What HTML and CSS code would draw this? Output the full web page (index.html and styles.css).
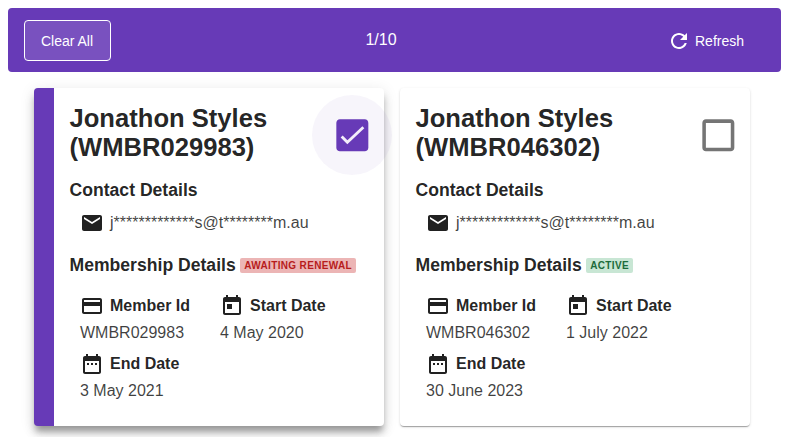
FILE: index.html
```html
<!DOCTYPE html>
<html lang="en">
<head>
<meta charset="utf-8">
<title>Memberships</title>
<link rel="stylesheet" href="styles.css">
</head>
<body>
<header class="bar">
  <button class="clear">Clear All</button>
  <span class="count">1/10</span>
  <button class="refresh"><svg viewBox="0 0 24 24"><path d="M17.65 6.35C16.2 4.9 14.21 4 12 4c-4.42 0-7.99 3.58-7.99 8s3.57 8 7.99 8c3.73 0 6.84-2.55 7.73-6h-2.08c-.82 2.33-3.04 4-5.65 4-3.31 0-6-2.69-6-6s2.69-6 6-6c1.66 0 3.14.69 4.22 1.78L13 11h7V4l-2.35 2.35z"/></svg>Refresh</button>
</header>
<main class="cards">
  <article class="card selected">
    <span class="check on"><svg viewBox="0 0 24 24"><path d="M19 3H5c-1.11 0-2 .9-2 2v14c0 1.1.89 2 2 2h14c1.11 0 2-.9 2-2V5c0-1.1-.89-2-2-2z"/><path class="tick" d="M6 12.6l3.2 3.3 9-8.4"/></svg></span>
    <h2>Jonathon Styles (WMBR029983)</h2>
    <h3 class="contact-title">Contact Details</h3>
    <div class="contact"><svg viewBox="0 0 24 24"><path d="M20 4H4c-1.1 0-1.99.9-1.99 2L2 18c0 1.1.9 2 2 2h16c1.1 0 2-.9 2-2V6c0-1.1-.9-2-2-2zm0 4l-8 5-8-5V6l8 5 8-5v2z"/></svg><span>j*************s@t********m.au</span></div>
    <div class="member-head"><h3>Membership Details</h3><span class="chip red">AWAITING RENEWAL</span></div>
    <div class="fields">
      <div class="field">
        <div class="label"><svg viewBox="0 0 24 24"><path d="M20 4H4c-1.11 0-1.99.89-1.99 2L2 18c0 1.11.89 2 2 2h16c1.11 0 2-.89 2-2V6c0-1.11-.89-2-2-2zm0 14H4v-6h16v6zm0-10H4V6h16v2z"/></svg>Member Id</div>
        <div class="value">WMBR029983</div>
      </div>
      <div class="field">
        <div class="label"><svg viewBox="0 0 24 24"><path d="M19 3h-1V1h-2v2H8V1H6v2H5c-1.11 0-1.99.9-1.99 2L3 19c0 1.1.89 2 2 2h14c1.1 0 2-.9 2-2V5c0-1.1-.9-2-2-2zm0 16H5V8h14v11zM7 10h5v5H7z"/></svg>Start Date</div>
        <div class="value">4 May 2020</div>
      </div>
      <div class="field">
        <div class="label"><svg viewBox="0 0 24 24"><path d="M9 11H7v2h2v-2zm4 0h-2v2h2v-2zm4 0h-2v2h2v-2zm2-7h-1V2h-2v2H8V2H6v2H5c-1.11 0-1.99.9-1.99 2L3 20c0 1.1.89 2 2 2h14c1.1 0 2-.9 2-2V6c0-1.1-.9-2-2-2zm0 16H5V9h14v11z"/></svg>End Date</div>
        <div class="value">3 May 2021</div>
      </div>
    </div>
  </article>
  <article class="card">
    <span class="check"><svg viewBox="0 0 24 24"><path d="M19 5v14H5V5h14m0-2H5c-1.1 0-2 .9-2 2v14c0 1.1.9 2 2 2h14c1.1 0 2-.9 2-2V5c0-1.1-.9-2-2-2z"/></svg></span>
    <h2>Jonathon Styles (WMBR046302)</h2>
    <h3 class="contact-title">Contact Details</h3>
    <div class="contact"><svg viewBox="0 0 24 24"><path d="M20 4H4c-1.1 0-1.99.9-1.99 2L2 18c0 1.1.9 2 2 2h16c1.1 0 2-.9 2-2V6c0-1.1-.9-2-2-2zm0 4l-8 5-8-5V6l8 5 8-5v2z"/></svg><span>j*************s@t********m.au</span></div>
    <div class="member-head"><h3>Membership Details</h3><span class="chip green">ACTIVE</span></div>
    <div class="fields">
      <div class="field">
        <div class="label"><svg viewBox="0 0 24 24"><path d="M20 4H4c-1.11 0-1.99.89-1.99 2L2 18c0 1.11.89 2 2 2h16c1.11 0 2-.89 2-2V6c0-1.11-.89-2-2-2zm0 14H4v-6h16v6zm0-10H4V6h16v2z"/></svg>Member Id</div>
        <div class="value">WMBR046302</div>
      </div>
      <div class="field">
        <div class="label"><svg viewBox="0 0 24 24"><path d="M19 3h-1V1h-2v2H8V1H6v2H5c-1.11 0-1.99.9-1.99 2L3 19c0 1.1.89 2 2 2h14c1.1 0 2-.9 2-2V5c0-1.1-.9-2-2-2zm0 16H5V8h14v11zM7 10h5v5H7z"/></svg>Start Date</div>
        <div class="value">1 July 2022</div>
      </div>
      <div class="field">
        <div class="label"><svg viewBox="0 0 24 24"><path d="M9 11H7v2h2v-2zm4 0h-2v2h2v-2zm4 0h-2v2h2v-2zm2-7h-1V2h-2v2H8V2H6v2H5c-1.11 0-1.99.9-1.99 2L3 20c0 1.1.89 2 2 2h14c1.1 0 2-.9 2-2V6c0-1.1-.9-2-2-2zm0 16H5V9h14v11z"/></svg>End Date</div>
        <div class="value">30 June 2023</div>
      </div>
    </div>
  </article>
</main>
</body>
</html>
```

FILE: styles.css
```css
* { box-sizing: border-box; }
html, body { height: 100%; }
body {
  margin: 0;
  padding: 8px 10px 0 8px;
  overflow: hidden;
  background: #fff;
  color: rgba(0, 0, 0, .87);
  font-family: "Liberation Sans", Arial, sans-serif;
  font-size: 16px;
}
.bar {
  display: flex;
  justify-content: space-between;
  align-items: center;
  height: 64px;
  padding: 0 16px;
  background: #673ab7;
  border-radius: 4px;
  color: #fff;
}
.clear {
  width: 87px;
  height: 41px;
  padding: 1px 1px 0 0;
  background: rgba(255, 255, 255, .12);
  border: 1px solid #fff;
  border-radius: 4px;
  color: #fff;
  font: 14px "Liberation Sans", Arial, sans-serif;
}
.count { margin-top: -1px; font-size: 16px; line-height: 20px; }
.refresh {
  display: flex;
  align-items: center;
  gap: 4px;
  width: 114px;
  height: 42px;
  margin-top: 2px;
  padding: 0 21px 0 16px;
  background: none;
  border: 0;
  color: #fff;
  font: 14px "Liberation Sans", Arial, sans-serif;
}
.refresh svg { flex: none; width: 24px; height: 24px; fill: #fff; }
.cards {
  display: flex;
  gap: 16px;
  margin: 16px 0 0 26px;
}
.card {
  position: relative;
  flex: none;
  width: 350px;
  height: 338px;
  padding: 16px;
  background: #fff;
  border-radius: 4px;
  box-shadow: 0 2px 1px -1px rgba(0,0,0,.2), 0 1px 1px 0 rgba(0,0,0,.14), 0 1px 3px 0 rgba(0,0,0,.12);
}
.card.selected {
  border-left: 20px solid #673ab7;
  box-shadow: 0 7px 6px -2px rgba(0,0,0,.3), 0 8px 10px 1px rgba(0,0,0,.1), 0 3px 14px 2px rgba(0,0,0,.08);
}
h2 {
  width: 250px;
  margin: 0 0 0 -.5px;
  font-size: 25.6px;
  line-height: 29px;
  font-weight: 700;
}
.check {
  position: absolute;
  top: 7px;
  right: -8px;
  display: flex;
  align-items: center;
  justify-content: center;
  width: 80px;
  height: 80px;
  border-radius: 50%;
}
.check svg { width: 42.67px; height: 42.67px; fill: #757575; }
.check.on { background: rgba(103, 58, 183, .05); }
.check.on svg { fill: #673ab7; }
.check .tick { fill: none; stroke: #f3eefa; stroke-width: 1.6; }
h3 { margin: 0; font-size: 17.6px; line-height: 20px; font-weight: 700; }
.contact-title { margin-top: 18px; margin-left: -.5px; }
.contact {
  display: flex;
  align-items: center;
  gap: 6px;
  height: 24px;
  margin: 11px 0 0 10px;
  font-size: 16px;
  color: rgba(0, 0, 0, .75);
}
.contact svg { flex: none; width: 24px; height: 24px; fill: rgba(0, 0, 0, .87); }
.member-head { display: flex; align-items: center; gap: 4.5px; margin-top: 20px; margin-left: -.5px; }
.chip {
  height: 15px;
  padding: 0 4px;
  border-radius: 2px;
  font-size: 10px;
  line-height: 15px;
  font-weight: 700;
  letter-spacing: .35px;
}
.chip.red { background: #ecb5b5; color: #b71c1c; }
.chip.green { background: #c8e6d4; color: #1b6b3a; }
.fields {
  display: grid;
  grid-template-columns: 140px 140px;
  row-gap: 8.5px;
  margin: 19px 0 0 10px;
}
.label {
  display: flex;
  align-items: center;
  gap: 6px;
  height: 24px;
  font-size: 16px;
  font-weight: 700;
}
.label svg { flex: none; width: 24px; height: 24px; fill: rgba(0, 0, 0, .87); }
.value { margin-top: 5px; font-size: 16px; line-height: 20px; color: rgba(0, 0, 0, .75); }
```
